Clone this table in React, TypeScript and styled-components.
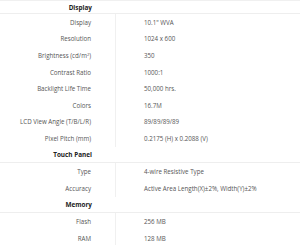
import React from 'react'
import styled, { createGlobalStyle } from 'styled-components'

const GlobalStyle = createGlobalStyle`
  html, body {
    margin: 0;
    padding: 0;
    background: #fff;
  }
  body {
    font-family: "Open Sans", "Liberation Sans", Arial, sans-serif;
  }
`

const SpecTable = styled.div`
  width: 300px;
  border-top: 1px solid #f0f0f0;
`

const SectionHeader = styled.div<{ $height: number }>`
  display: grid;
  grid-template-columns: 116px 1fr;
  height: ${p => p.$height}px;
  align-items: center;
  border-bottom: 1px solid #eeeeee;
  box-sizing: border-box;

  span {
    text-align: right;
    padding-right: 24px;
    font-size: 6.4px;
    font-weight: 700;
    color: #222;
  }
`

const Row = styled.div`
  display: grid;
  grid-template-columns: 116px 1fr;
  height: 16.6px;
  align-items: stretch;
`

const Label = styled.div`
  display: flex;
  align-items: center;
  justify-content: flex-end;
  padding-right: 24px;
  border-right: 1px solid #f0f0f0;
  font-size: 6.2px;
  color: #555;
  white-space: nowrap;

  sup {
    font-size: 4px;
    line-height: 0;
  }
`

const Value = styled.div`
  display: flex;
  align-items: center;
  padding-left: 28px;
  font-size: 6.2px;
  color: #555;
  white-space: nowrap;
`

type Spec = { label: React.ReactNode; value: string }

const sections: { title: string; height: number; rows: Spec[] }[] = [
  {
    title: 'Display',
    height: 13,
    rows: [
      { label: 'Display', value: '10.1" WVA' },
      { label: 'Resolution', value: '1024 x 600' },
      { label: <>Brightness (cd/m<sup>2</sup>)</>, value: '350' },
      { label: 'Contrast Ratio', value: '1000:1' },
      { label: 'Backlight Life Time', value: '50,000 hrs.' },
      { label: 'Colors', value: '16.7M' },
      { label: 'LCD View Angle (T/B/L/R)', value: '89/89/89/89' },
      { label: 'Pixel Pitch (mm)', value: '0.2175 (H) x 0.2088 (V)' },
    ],
  },
  {
    title: 'Touch Panel',
    height: 16.6,
    rows: [
      { label: 'Type', value: '4-wire Resistive Type' },
      { label: 'Accuracy', value: 'Active Area Length(X)±2%, Width(Y)±2%' },
    ],
  },
  {
    title: 'Memory',
    height: 16.6,
    rows: [
      { label: 'Flash', value: '256 MB' },
      { label: 'RAM', value: '128 MB' },
    ],
  },
]

export default function App() {
  return (
    <>
      <GlobalStyle />
      <SpecTable>
        {sections.map(s => (
          <React.Fragment key={s.title}>
            <SectionHeader $height={s.height}>
              <span>{s.title}</span>
            </SectionHeader>
            {s.rows.map((r, i) => (
              <Row key={i}>
                <Label>{r.label}</Label>
                <Value>{r.value}</Value>
              </Row>
            ))}
          </React.Fragment>
        ))}
      </SpecTable>
    </>
  )
}
